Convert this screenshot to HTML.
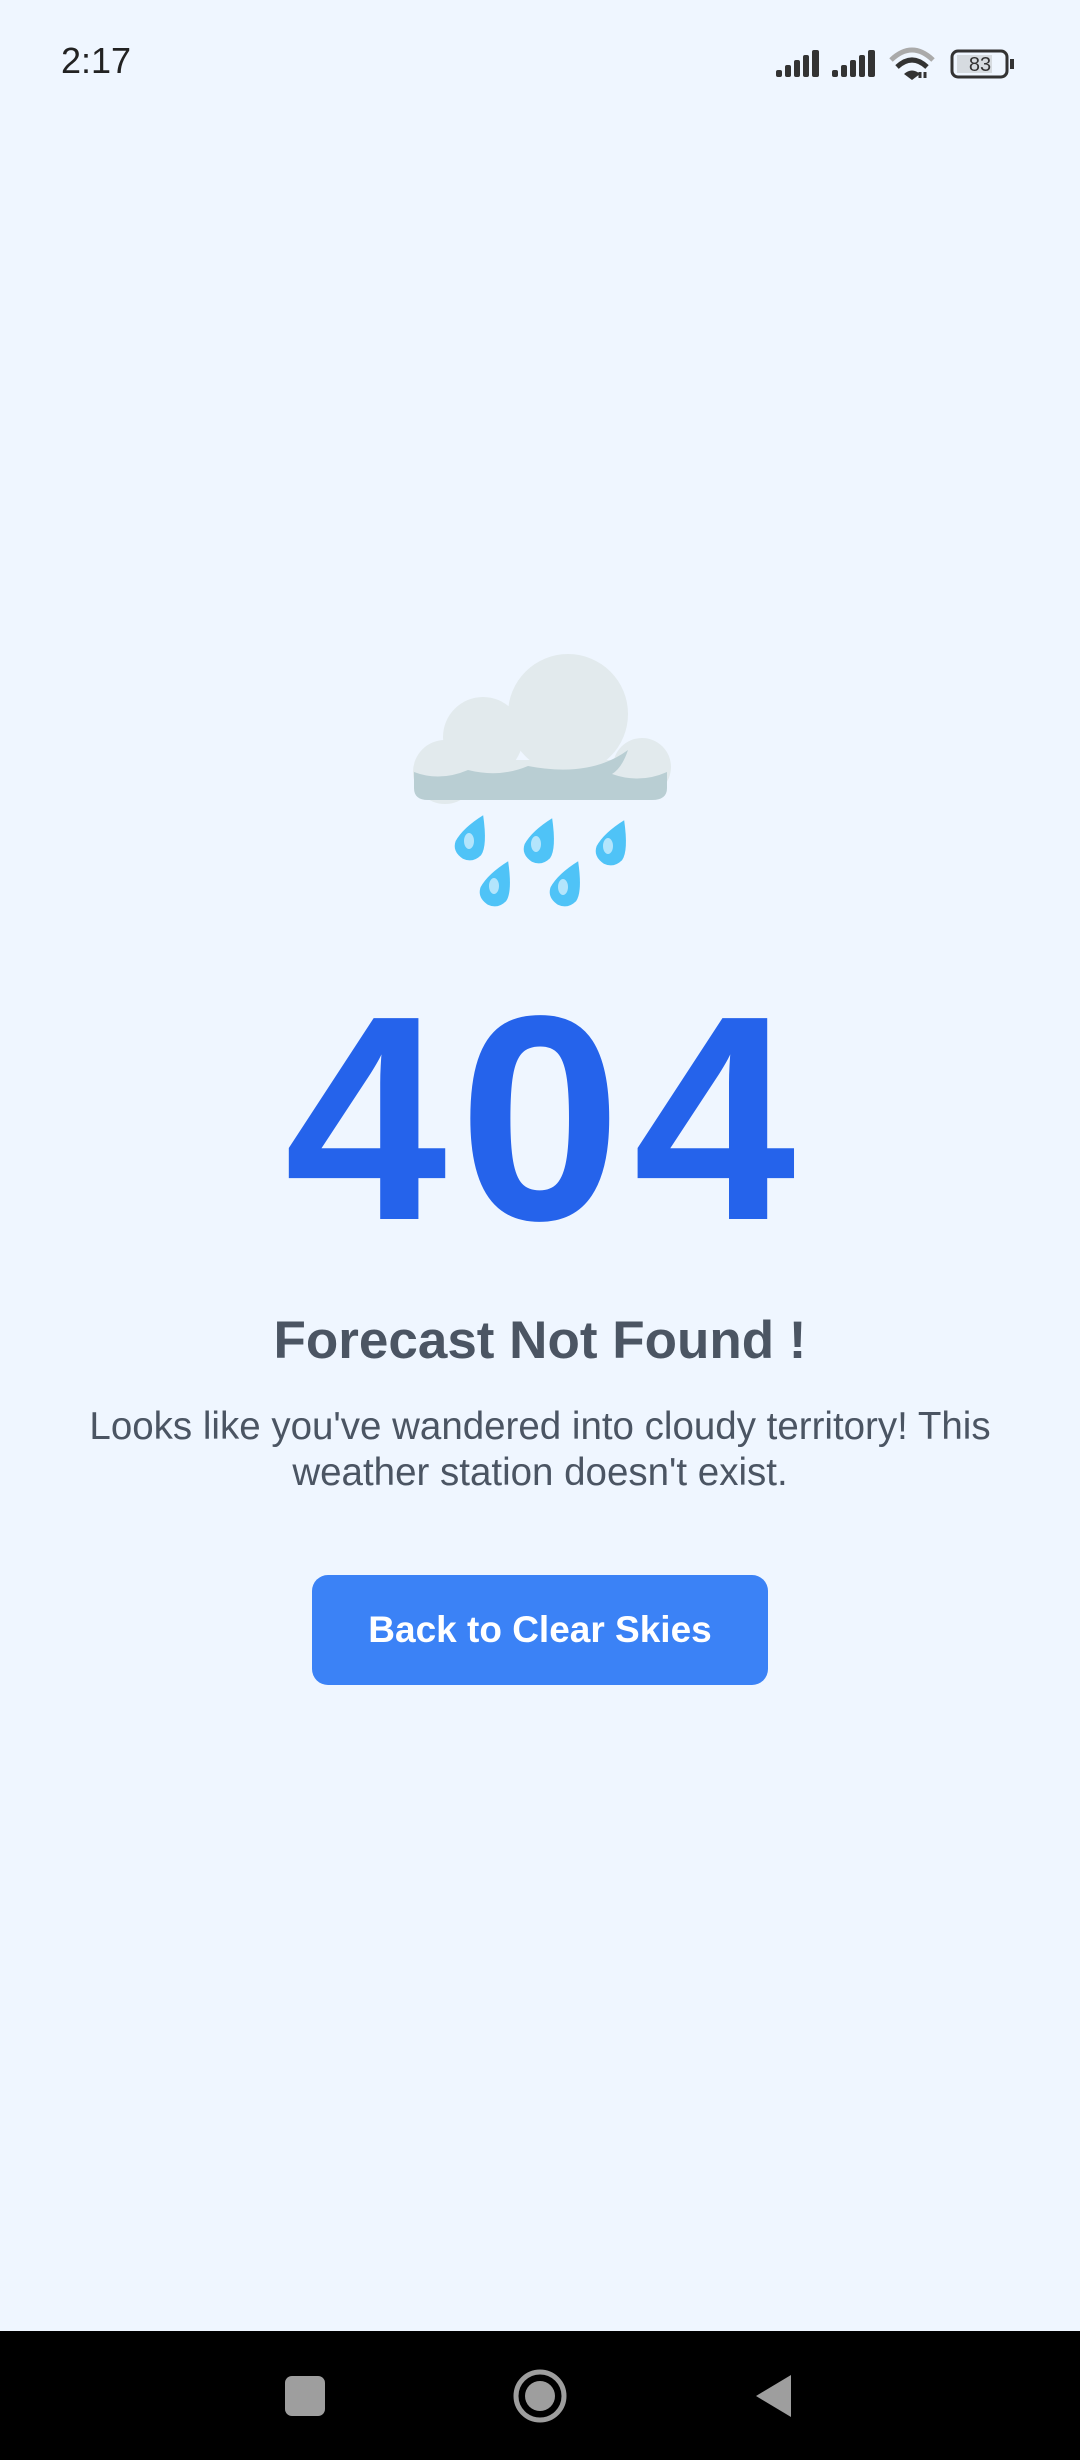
<!DOCTYPE html>
<html><head><meta charset="utf-8"><style>
*{margin:0;padding:0;box-sizing:border-box}
body{width:1080px;height:2460px;background:#eff6ff;font-family:"Liberation Sans",Roboto,sans-serif;position:relative;overflow:hidden}
.abs{position:absolute}
.time{left:61px;top:40px;font-size:36px;color:#222}
.big{left:0;width:1080px;top:972px;text-align:center;font-size:292px;font-weight:bold;color:#2563eb;line-height:292px;letter-spacing:12px;text-indent:12px}
.title{left:0;width:1080px;top:1310px;text-align:center;font-size:53px;font-weight:bold;color:#4b5563}
.body{left:0;width:1080px;top:1404px;text-align:center;font-size:38.5px;color:#4b5563;line-height:46px}
.btn{left:312px;top:1575px;width:456px;height:110px;background:#3b82f6;border-radius:16px;color:#fff;font-size:37px;font-weight:bold;text-align:center;line-height:110px}
.nav{left:0;top:2331px;width:1080px;height:129px;background:#000}
</style></head><body>
<div class="abs time">2:17</div>
<svg class="abs" style="left:0;top:0" width="1080" height="100">
<g fill="#333">
<rect x="776" y="70" width="6" height="7" rx="2"/><rect x="785" y="65" width="6" height="12" rx="2"/><rect x="794" y="60" width="6" height="17" rx="2"/><rect x="803" y="55" width="6" height="22" rx="2"/><rect x="812" y="50" width="7" height="27" rx="2"/>
<rect x="832" y="70" width="6" height="7" rx="2"/><rect x="841" y="65" width="6" height="12" rx="2"/><rect x="850" y="60" width="6" height="17" rx="2"/><rect x="859" y="55" width="6" height="22" rx="2"/><rect x="868" y="50" width="7" height="27" rx="2"/>
</g>
<path d="M891 60 Q912 40 933 60" stroke="#aaa" stroke-width="5" fill="none"/>
<path d="M897 67 Q912 53 927 67" stroke="#333" stroke-width="5" fill="none"/>
<path d="M904 74 Q912 67 920 74 L912 80 Z" fill="#333"/>
<path d="M920 78v-6M925 72v6" stroke="#333" stroke-width="3"/>
<rect x="952" y="51" width="55" height="26" rx="6" fill="none" stroke="#333" stroke-width="3"/>
<rect x="957" y="55" width="35" height="18" fill="#d6dbe0"/>
<rect x="1010" y="59" width="4" height="10" fill="#333"/>
<text x="980" y="71" font-size="20" fill="#333" text-anchor="middle" font-family="Liberation Sans">83</text>
</svg>
<svg class="abs" style="left:0;top:0" width="1080" height="960">
<g fill="#e2eaed">
<circle cx="568" cy="714" r="60"/><circle cx="483" cy="737" r="40"/><circle cx="445" cy="772" r="32"/><circle cx="642" cy="767" r="29"/>
<rect x="414" y="760" width="253" height="40" rx="20"/>
</g>
<path d="M414 772 Q440 782 468 770 Q500 778 528 766 Q590 778 628 750 Q622 768 612 774 Q640 784 667 772 L667 788 Q667 800 652 800 L428 800 Q414 800 414 788 Z" fill="#b9ced3"/>
<g fill="#4fc3f7">
<path d="M0 -24 Q17 2 15 13 Q11 24 0 24 Q-13 22 -14 11 Q-13 -4 0 -24Z" transform="translate(473,837) rotate(25)"/>
<path d="M0 -24 Q17 2 15 13 Q11 24 0 24 Q-13 22 -14 11 Q-13 -4 0 -24Z" transform="translate(542,840) rotate(25)"/>
<path d="M0 -24 Q17 2 15 13 Q11 24 0 24 Q-13 22 -14 11 Q-13 -4 0 -24Z" transform="translate(614,842) rotate(25)"/>
<path d="M0 -24 Q17 2 15 13 Q11 24 0 24 Q-13 22 -14 11 Q-13 -4 0 -24Z" transform="translate(498,883) rotate(25)"/>
<path d="M0 -24 Q17 2 15 13 Q11 24 0 24 Q-13 22 -14 11 Q-13 -4 0 -24Z" transform="translate(568,883) rotate(25)"/>
</g>
<g fill="#b3e5fc">
<ellipse cx="469" cy="841" rx="5" ry="8"/><ellipse cx="536" cy="844" rx="5" ry="8"/><ellipse cx="608" cy="846" rx="5" ry="8"/><ellipse cx="494" cy="886" rx="5" ry="8"/><ellipse cx="563" cy="887" rx="5" ry="8"/>
</g>
</svg>
<div class="abs big">404</div>
<div class="abs title">Forecast Not Found !</div>
<div class="abs body">Looks like you've wandered into cloudy territory! This<br>weather station doesn't exist.</div>
<div class="abs btn">Back to Clear Skies</div>
<div class="abs nav"></div>
<svg class="abs" style="left:0;top:2331px" width="1080" height="129">
<rect x="285" y="45" width="40" height="40" rx="7" fill="#9e9e9e"/>
<circle cx="540" cy="65" r="24" fill="none" stroke="#9e9e9e" stroke-width="5"/><circle cx="540" cy="65" r="15" fill="#9e9e9e"/>
<path d="M791 44 L791 86 L756 65 Z" fill="#9e9e9e"/>
</svg>
</body></html>
